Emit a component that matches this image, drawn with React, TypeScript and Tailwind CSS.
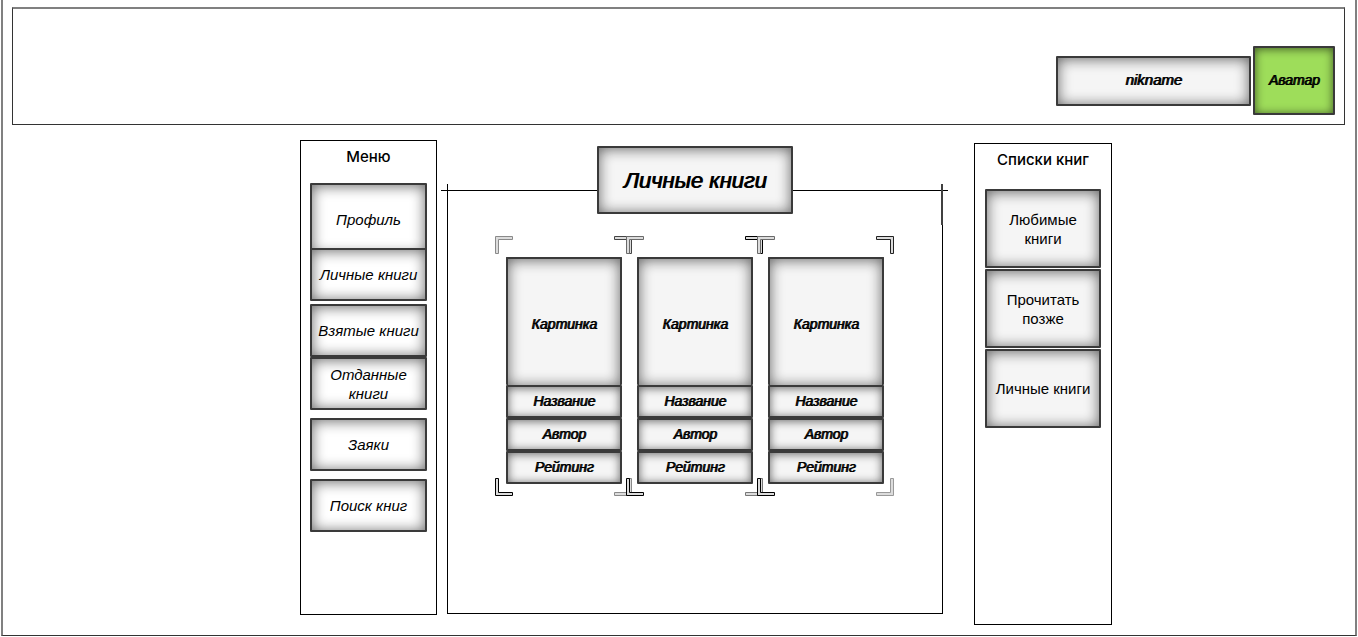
import type { ReactNode } from "react";

const raised =
  "flex items-center justify-center border-2 border-[#3a3a3a] rounded-[1px] text-black text-center";
const shadeLarge = "shadow-[inset_0_1px_14px_0_rgba(0,0,0,0.6)]";
const shadeSmall = "shadow-[inset_0_1px_10px_0_rgba(0,0,0,0.6)]";
const heavy = "[text-shadow:1px_0_0_#000]";
const heading = "pt-[6px] text-center font-['Inter',sans-serif] text-[15px] leading-5 font-medium";

const menu = [
  { label: "Профиль", size: "h-[72px]" },
  { label: "Личные книги", size: "-mt-[7px] h-[53px]" },
  { label: "Взятые книги", size: "mt-[3px] h-[53px]" },
  { label: "Отданные книги", size: "h-[53px]" },
  { label: "Заяки", size: "mt-2 h-[53px]" },
  { label: "Поиск книг", size: "mt-2 h-[53px]" },
];

const lists = ["Любимые книги", "Прочитать позже", "Личные книги"];

type Tones = { tl: string; tr: string; bl: string; br: string };

const cards: Tones[] = [
  { tl: "#8a8a8a", tr: "#444444", bl: "#000000", br: "#8a8a8a" },
  { tl: "#6a6a6a", tr: "#000000", bl: "#000000", br: "#777777" },
  { tl: "#6a6a6a", tr: "#222222", bl: "#000000", br: "#999999" },
];

function Corner({ place, tone }: { place: string; tone: string }) {
  return (
    <svg
      className={"absolute h-[18px] w-[18px] " + place}
      viewBox="0 0 18 18"
      aria-hidden="true"
    >
      <path d="M.5.5H17.5V3.5H3.5V17.5H.5Z" fill="#dcdcdc" stroke={tone} />
    </svg>
  );
}

function CardRow({ children }: { children: ReactNode }) {
  return (
    <div className={`${raised} ${shadeSmall} ${heavy} h-[33px] bg-[#f5f5f5] text-[14px] italic`}>
      {children}
    </div>
  );
}

function BookCard({ tones }: { tones: Tones }) {
  return (
    <article className="relative w-[137px] pt-[21px] pr-[10px] pb-[12px] pl-[11px]">
      <Corner place="left-0 top-0" tone={tones.tl} />
      <Corner place="right-0 top-0 -scale-x-100" tone={tones.tr} />
      <Corner place="left-0 bottom-0 -scale-y-100" tone={tones.bl} />
      <Corner place="right-0 bottom-0 rotate-180" tone={tones.br} />
      <div
        className={`${raised} ${shadeLarge} ${heavy} h-[128px] border-b-0 bg-[#f5f5f5] pt-1 text-[14px] italic`}
      >
        Картинка
      </div>
      <CardRow>Название</CardRow>
      <CardRow>Автор</CardRow>
      <CardRow>Рейтинг</CardRow>
    </article>
  );
}

export default function App() {
  return (
    <div className="bg-white pr-px pl-px font-['Liberation_Sans',Arial,sans-serif] text-black">
      <div className="border-x-2 border-b border-[#808080] border-b-[#333333] pt-[7px] pb-[10px]">
        <header className="mr-[10px] ml-[9px] flex h-[118px] items-center justify-end gap-[2px] border border-t-2 border-[#333333] border-t-[#808080] pt-[28px] pr-[9px]">
          <div
            className={`${raised} ${shadeLarge} ${heavy} h-[50px] w-[195px] bg-[#f5f5f5] text-[15px] italic`}
          >
            nikname
          </div>
          <button
            type="button"
            className={`${raised} ${shadeSmall} ${heavy} h-[69px] w-[82px] border-[#1c2a10] bg-[#9edd5a] text-[14px] italic`}
          >
            Аватар
          </button>
        </header>

        <div className="flex items-start justify-center pt-[15px] pl-[54px]">
          <nav aria-label="Меню" className="min-h-[475px] w-[137px] border border-black px-[9px]">
            <h2 className={heading}>Меню</h2>
            <ul className="pt-[16px]">
              {menu.map((item) => (
                <li key={item.label} className={"relative " + item.size}>
                  <button
                    type="button"
                    className={`${raised} ${shadeLarge} h-full w-full bg-white px-1 text-[15px] leading-[19px] italic`}
                  >
                    {item.label}
                  </button>
                </li>
              ))}
            </ul>
          </nav>

          <main className="ml-[10px] flex w-[496px] flex-col items-center pt-[6px]">
            <h1
              className={`${raised} ${shadeLarge} ${heavy} relative z-10 h-[68px] w-[196px] bg-[#f5f5f5] text-[22px] italic`}
            >
              Личные книги
            </h1>
            <section
              aria-label="Книги"
              className="relative -mt-6 min-h-[424px] w-full border border-black pt-[45px] pl-[47px]"
            >
              <span className="absolute -top-px -left-[7px] h-px w-[7px] bg-black" />
              <span className="absolute -top-px -right-[6px] h-px w-[6px] bg-black" />
              <span className="absolute -top-[7px] -left-px h-[7px] w-px bg-black" />
              <span className="absolute -top-[7px] -right-px h-[41px] w-[2px] bg-[#404040]" />
              <div className="flex -space-x-[6px]">
                {cards.map((tones, i) => (
                  <BookCard key={i} tones={tones} />
                ))}
              </div>
            </section>
          </main>

          <aside
            aria-label="Списки книг"
            className="mt-[3px] ml-[31px] min-h-[482px] w-[138px] border border-black px-[10px]"
          >
            <h2 className={heading}>Списки книг</h2>
            <ul className="flex flex-col gap-px pt-[19px]">
              {lists.map((label) => (
                <li key={label} className="h-[79px]">
                  <button
                    type="button"
                    className={`${raised} ${shadeLarge} h-full w-full bg-[#f5f5f5] px-1 text-[15px] leading-[19px]`}
                  >
                    {label}
                  </button>
                </li>
              ))}
            </ul>
          </aside>
        </div>
      </div>
    </div>
  );
}
